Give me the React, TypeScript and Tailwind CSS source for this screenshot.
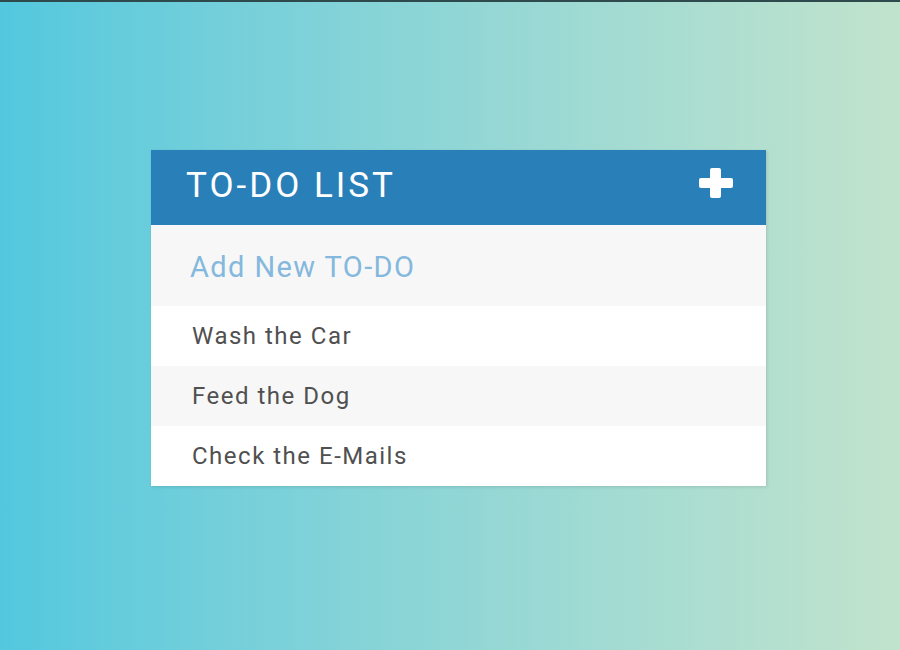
import { useState } from "react";

const todos = ["Wash the Car", "Feed the Dog", "Check the E-Mails"];

export default function App() {
  const [items] = useState(todos);

  return (
    <div className="h-[650px] w-full border-t-2 border-[#2e4a4c] bg-gradient-to-r from-[#52c8de] to-[#c1e3cc] pt-[148px] pl-[151px] font-['Roboto',sans-serif]">
      <div className="w-[615px] bg-white shadow-[1px_1px_3px_rgba(0,0,0,0.12)]">
        <div className="flex h-[75px] items-center justify-between bg-[#2980b9] pl-[35px] pr-[33px]">
          <h1 className="text-[35px] leading-none tracking-[3px] text-white pb-[4px]">TO-DO LIST</h1>
          <svg width="34" height="30" viewBox="0 0 34 30" className="mb-[10px]">
            <rect x="11" y="0" width="11" height="30" rx="2" fill="white" />
            <rect x="0" y="10" width="34" height="10" rx="2" fill="white" />
          </svg>
        </div>
        <div className="flex h-[81px] items-center bg-[#f7f7f7] pl-[39px] pt-[5px]">
          <span className="text-[29px] tracking-[1.4px] text-[#84b8dd]">Add New TO-DO</span>
        </div>
        {items.map((item, i) => (
          <div
            key={item}
            className={
              "flex h-[60px] items-center pl-[41px] text-[24px] tracking-[1.5px] text-[#505050] " +
              (i % 2 === 1 ? "bg-[#f7f7f7]" : "bg-white")
            }
          >
            {item}
          </div>
        ))}
      </div>
    </div>
  );
}
